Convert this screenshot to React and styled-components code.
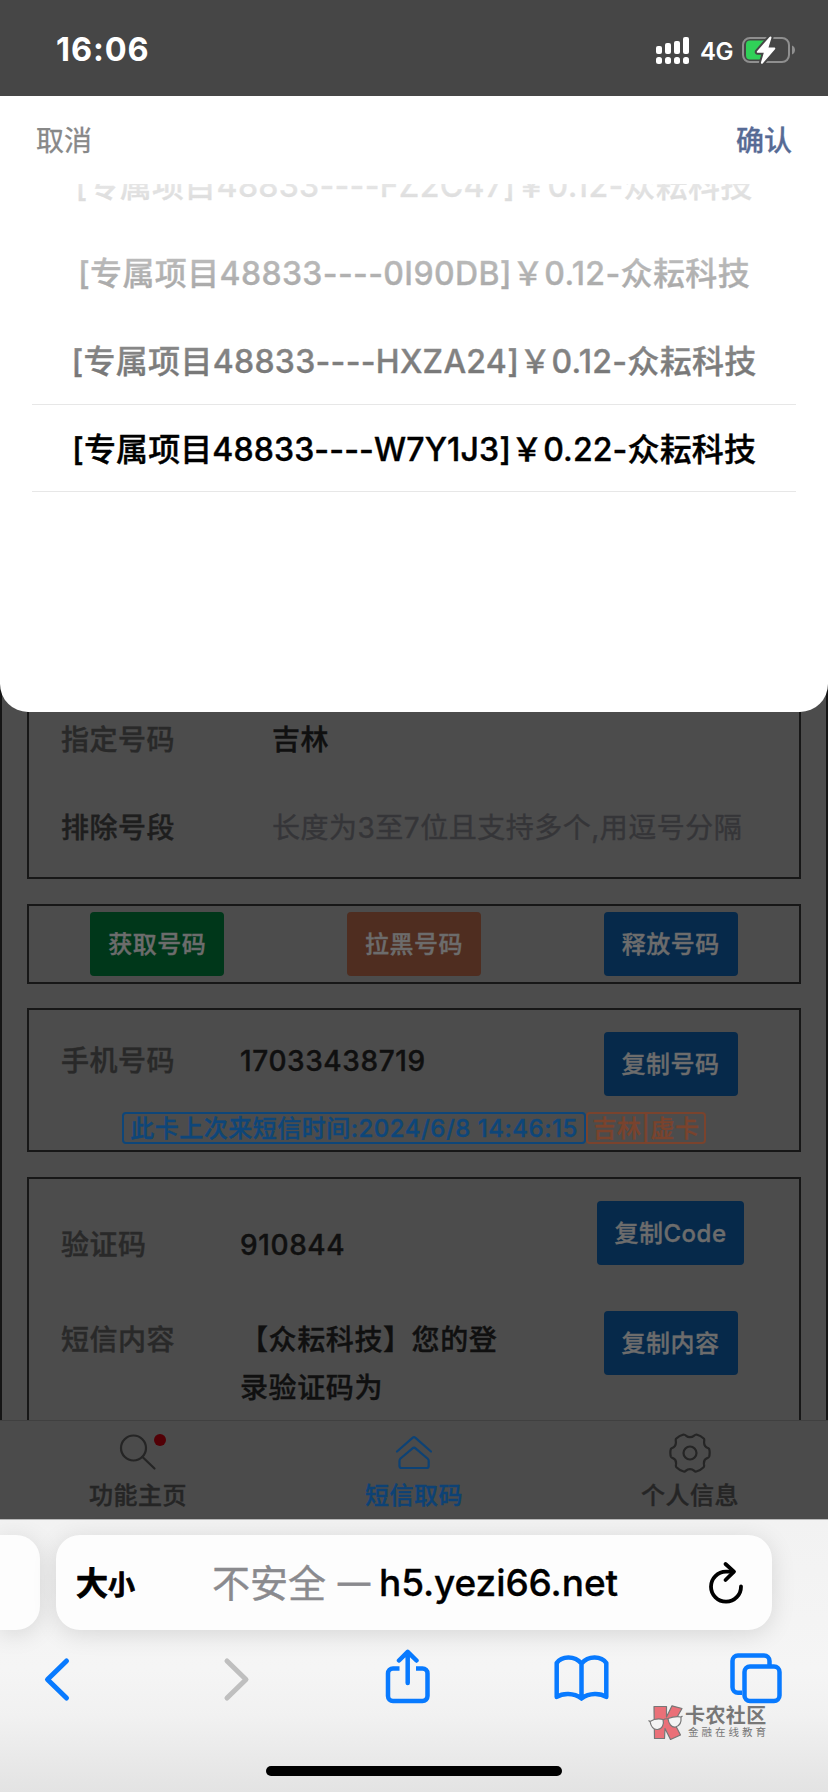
import React from "react";
import styled, { createGlobalStyle } from "styled-components";

const GlobalStyle = createGlobalStyle`
  * {
    box-sizing: border-box;
  }
  body {
    margin: 0;
    background: #4c4c4c;
    font-family: Inter, "Noto Sans CJK SC", sans-serif;
  }
`;

const options = [
  { text: "[专属项目48833----FZ2C47]￥0.12-众耘科技", spacing: 0.28 },
  { text: "[专属项目48833----0I90DB]￥0.12-众耘科技", spacing: 0.36 },
  { text: "[专属项目48833----HXZA24]￥0.12-众耘科技", spacing: 0.28 },
  { text: "[专属项目48833----W7Y1J3]￥0.22-众耘科技", spacing: 0.12, selected: true },
];

const SignalIcon = () => (
  <svg width="34" height="27" viewBox="0 0 34 27" fill="#fff">
    <rect x="0" y="9" width="6" height="8" rx="2" />
    <rect x="9" y="6" width="6" height="11" rx="2" />
    <rect x="18" y="4" width="6" height="13" rx="2" />
    <rect x="27" y="0" width="6" height="17" rx="2" />
    <rect x="0" y="20" width="6" height="7" rx="2.5" />
    <rect x="9" y="20" width="6" height="7" rx="2.5" />
    <rect x="18" y="20" width="6" height="7" rx="2.5" />
    <rect x="27" y="20" width="6" height="7" rx="2.5" />
  </svg>
);

const BatteryIcon = () => (
  <svg width="54" height="28" viewBox="0 0 54 28">
    <rect x="1" y="2" width="46" height="24" rx="7" fill="none" stroke="#8f8f8f" strokeWidth="2" />
    <path d="M50 9.5v9c4-1.6 4-7.4 0-9z" fill="#8f8f8f" />
    <path d="M8 4.5h15v19H8a4 4 0 0 1-4-4v-11a4 4 0 0 1 4-4z" fill="#30d158" />
    <path
      d="M27.5 1L15 15.2c-.6.8-.2 1.6.8 1.6h6L19 26.2c-.4 1.4 1 2 1.9 1L33 13.2c.6-.8.2-1.7-.8-1.7h-5.7L29.4 2c.4-1.500-1-2-1.900-1z"
      fill="#fff"
      stroke="#464646"
      strokeWidth="4"
      paintOrder="stroke"
    />
  </svg>
);

const SearchIcon = () => (
  <svg width="40" height="40" viewBox="0 0 40 40" fill="none" stroke="#252525" strokeWidth="2.2" strokeLinecap="round">
    <circle cx="15.500" cy="16" r="12.500" />
    <path d="M24.500 25L36.500 36.500" />
  </svg>
);

const HomeIcon = () => (
  <svg width="40" height="42" viewBox="0 -2 40 42" fill="none" stroke="#0d4275" strokeWidth="2.2" strokeLinecap="round" strokeLinejoin="round">
    <path d="M3 17.500L18.800 3.600a1.800 1.800 0 0 1 2.400 0L37 17.500" />
    <path d="M6.500 24.500L18.500 14.300a2.300 2.300 0 0 1 3 0L33.500 24.500c.8.7 1.200 1.300 1.200 2.300V32a2 2 0 0 1-2 2H7.500a2 2 0 0 1-2-2v-5.200c0-1 .3-1.700 1-2.300z" />
  </svg>
);

const GearIcon = () => (
  <svg width="42" height="42" viewBox="0 0 42 42" fill="none" stroke="#252525" strokeWidth="2.2" strokeLinejoin="round">
    <circle cx="21" cy="21" r="6.500" />
    <path d="M14.500 2.500c1 0 2 .6 2.700 1.300 2 1.700 5.600 1.700 7.600 0 .8-.7 1.700-1.300 2.700-1.300 3 .8 5.400 2.200 7.500 4.200.5 1 .2 2.200.1 3.300-.2 3 1.500 5.300 4.300 6.300.8.4 1 1.200 1.100 2 .3 2.100.2 4-.3 6.200-.3.900-1.100 1.300-1.900 1.600-2.600 1.100-3.700 3.600-3.300 6.300.2 1 .3 2-.4 2.800-2 2-4.500 3.500-7.300 4.300-.9.200-1.700-.300-2.300-.9-2.100-2-5.900-2-8 0-.6.6-1.400 1.100-2.300.9-2.800-.8-5.300-2.300-7.300-4.300-.7-.8-.6-1.800-.4-2.800.4-2.700-.7-5.200-3.300-6.300-.8-.3-1.600-.7-1.900-1.600-.5-2.200-.6-4.100-.3-6.200.1-.8.3-1.600 1.100-2 2.800-1 4.500-3.300 4.300-6.300-.1-1.100-.4-2.300.1-3.300 2.100-2 4.500-3.400 7.500-4.200z" />
  </svg>
);

const ReloadIcon = () => (
  <svg width="36" height="44" viewBox="0 0 36 44" fill="none" stroke="#000" strokeWidth="3.800" strokeLinecap="round" strokeLinejoin="round">
    <path d="M33 25.500A15 15 0 1 1 18 10.700h7" />
    <path d="M17.500 3L26 10.700 17.500 19" />
  </svg>
);

const toolIcons = [
  <svg key="back" width="54" height="60" viewBox="0 0 54 60" fill="none" stroke="#087aff" strokeWidth="5" strokeLinecap="round" strokeLinejoin="round">
    <path d="M36.500 12L17.500 30.500 36.500 49" />
  </svg>,
  <svg key="forward" width="54" height="60" viewBox="0 0 54 60" fill="none" stroke="#bfbfbf" strokeWidth="5" strokeLinecap="round" strokeLinejoin="round">
    <path d="M23 12L42 30.500 23 49" />
  </svg>,
  <svg key="share" width="54" height="60" viewBox="0 0 54 60" fill="none" stroke="#087aff" strokeWidth="4.500" strokeLinejoin="round">
    <path d="M20.500 19.500H14a5 5 0 0 0-5 5V47a5 5 0 0 0 5 5h29.500a5 5 0 0 0 5-5V24.500a5 5 0 0 0-5-5H37" />
    <path d="M28.700 34V3M20 11.500L28.700 2.800 37.500 11.500" strokeLinecap="round" />
  </svg>,
  <svg key="book" width="56" height="60" viewBox="0 0 56 60" fill="none" stroke="#087aff" strokeWidth="4.500" strokeLinejoin="round" strokeLinecap="round">
    <path d="M28.500 14.500C21.500 6 8.500 7 3.700 14v34C9.500 44 20.500 43.500 28.500 49.500V14.500C35.500 6 48.500 7 53.300 14v34C47.500 44 36.500 43.500 28.500 49.500" />
  </svg>,
  <svg key="tabs" width="54" height="60" viewBox="0 0 54 60" fill="none" stroke="#087aff" strokeWidth="4.500" strokeLinejoin="round">
    <path d="M13 43.800H9a5.500 5.500 0 0 1-5.500-5.500V12A5.500 5.500 0 0 1 9 6.500h26A5.500 5.500 0 0 1 40.500 12v5.500" />
    <rect x="15.500" y="17.500" width="35" height="34.500" rx="5.500" />
  </svg>,
];

const KanongLogo = () => (
  <svg width="36" height="36" viewBox="0 0 36 36" stroke="#777" strokeWidth="1.200" strokeLinejoin="round">
    <path d="M6 1.500h12.500v10.500L24 .8l10 2.700-8 14 6.500 12.500-10 4.500-5.500-11-.5 10H6.500z" fill="#ea7078" />
    <path d="M2 16.500c4-2.500 9-3 13-2 1.500 5-1 9.500-5.500 10-4 .3-6.500-3-7.500-8zM20 13.500c4-1.500 9-2.500 13-1.500.5 5-1.500 9-5.500 10-4 .5-7-3-7.500-8.500z" fill="#f4f4f4" />
    <path d="M15 15c1.500-1 3.500-1.500 5-1M2 16.500L.5 15.500M33 12l1.500-1" fill="none" />
  </svg>
);

export default function App() {
  return (
    <Screen>
      <GlobalStyle />
      <StatusBar>
        <Clock>16:06</Clock>
        <StatusIcons>
          <SignalIcon />
          <Network>4G</Network>
          <BatteryIcon />
        </StatusIcons>
      </StatusBar>

      <Picker>
        <PickerHeader>
          <PickerAction>取消</PickerAction>
          <PickerAction $confirm>确认</PickerAction>
        </PickerHeader>
        <Wheel>
          {options.map((item) => (
            <Option key={item.text} $selected={item.selected} $spacing={item.spacing}>
              {item.text}
            </Option>
          ))}
          <WheelMask />
        </Wheel>
      </Picker>

      <Page>
        <Section $height={207} $first>
          <FormRow>
            <Label>指定号码</Label>
            <Field>吉林</Field>
          </FormRow>
          <FormRow>
            <Label $dark>排除号段</Label>
            <Field $placeholder>长度为3至7位且支持多个,用逗号分隔</Field>
          </FormRow>
        </Section>

        <Section $height={80}>
          <ButtonRow>
            <Cell><Button $color="#00371a">获取号码</Button></Cell>
            <Cell><Button $color="#4f2d20">拉黑号码</Button></Cell>
            <Cell><Button>释放号码</Button></Cell>
          </ButtonRow>
        </Section>

        <Section $height={144}>
          <ResultRow $height={102}>
            <Label>手机号码</Label>
            <Value>17033438719</Value>
            <Cell $offset={6}><Button>复制号码</Button></Cell>
          </ResultRow>
          <Tags>
            <Tag $width={464} $color="#0e4679">此卡上次来短信时间:2024/6/8 14:46:15</Tag>
            <Tag $width={120} $color="#7a432d">吉林|虚卡</Tag>
          </Tags>
        </Section>

        <Section $height={300}>
          <ResultRow $height={132}>
            <Label>验证码</Label>
            <Value>910844</Value>
            <Cell $offset={-24}><Button $wide>复制Code</Button></Cell>
          </ResultRow>
          <ResultRow $height={132} $top>
            <Label>短信内容</Label>
            <Value>【众耘科技】您的登录验证码为</Value>
            <Cell><Button>复制内容</Button></Cell>
          </ResultRow>
        </Section>
      </Page>

      <TabBar>
        <Tab>
          <TabIcon><SearchIcon /><Dot /></TabIcon>
          功能主页
        </Tab>
        <Tab $active>
          <TabIcon><HomeIcon /></TabIcon>
          短信取码
        </Tab>
        <Tab>
          <TabIcon><GearIcon /></TabIcon>
          个人信息
        </Tab>
      </TabBar>

      <Browser>
        <AddressRow>
          <PreviousTab />
          <AddressBar>
            <TextSize>大<small>小</small></TextSize>
            <Address>
              <Insecure>不安全</Insecure>
              <Dash>—</Dash>
              <Host>h5.yezi66.net</Host>
            </Address>
            <ReloadIcon />
          </AddressBar>
        </AddressRow>
        <Toolbar>{toolIcons}</Toolbar>
        <HomeIndicator />
        <Watermark>
          <KanongLogo />
          <WatermarkText>
            <strong>卡农社区</strong>
            <span>金融在线教育</span>
          </WatermarkText>
        </Watermark>
      </Browser>
    </Screen>
  );
}

const Screen = styled.div`
  width: 828px;
  height: 1792px;
  display: flex;
  flex-direction: column;
  overflow: hidden;
  white-space: nowrap;
`;

const StatusBar = styled.header`
  height: 96px;
  flex: none;
  display: flex;
  align-items: center;
  justify-content: space-between;
  padding: 4px 32px 0 56px;
  background: #464646;
  color: #fff;
`;

const Clock = styled.span`
  padding-bottom: 2px;
  font-size: 32.500px;
  font-weight: 700;
  letter-spacing: 0.9px;
`;

const StatusIcons = styled.div`
  display: flex;
  align-items: center;
`;

const Network = styled.span`
  margin: 2px 9px 0 10px;
  font-size: 24px;
  font-weight: 600;
  letter-spacing: -0.5px;
`;

const Picker = styled.section`
  position: relative;
  z-index: 1;
  height: 616px;
  flex: none;
  border-radius: 0 0 28px 28px;
  background: #fff;
`;

const PickerHeader = styled.div`
  height: 88px;
  display: flex;
  align-items: center;
  justify-content: space-between;
  padding: 0 36px 2px;
`;

const PickerAction = styled.span`
  font-size: 28px;
  font-weight: ${(props) => (props.$confirm ? 500 : 400)};
  color: ${(props) => (props.$confirm ? "#576b95" : "#888")};
  -webkit-text-stroke: 0.3px;
`;

const Wheel = styled.div`
  position: relative;
  height: 500px;
  overflow: hidden;
  padding: 0 32px;
  &::before {
    content: "";
    display: block;
    margin-top: -44px;
  }
`;

const Option = styled.div`
  height: 88px;
  display: flex;
  align-items: center;
  justify-content: center;
  padding-bottom: 2px;
  font-size: 32px;
  font-weight: 500;
  letter-spacing: ${(props) => props.$spacing}px;
  -webkit-text-stroke: 0.4px;
  color: #000;
  border: solid #e7e7e7;
  border-width: ${(props) => (props.$selected ? "1px 0" : "0")};
`;

const WheelMask = styled.div`
  position: absolute;
  top: 0;
  left: 0;
  width: 100%;
  height: 220px;
  background: linear-gradient(rgba(255, 255, 255, 0.9), rgba(255, 255, 255, 0.4));
`;

const Page = styled.main`
  height: 748px;
  flex: none;
  margin-top: -40px;
  padding: 0 25px;
  overflow: hidden;
  background: #4c4c4c;
  border: solid #151515;
  border-width: 0 2px;
  -webkit-text-stroke: 0.4px;
`;

const Section = styled.section`
  height: ${(props) => props.$height}px;
  margin-bottom: 24.670px;
  border: 2px solid #171717;
  padding-top: ${(props) => (props.$first ? 20 : 0)}px;
`;

const FormRow = styled.div`
  height: 88px;
  display: flex;
  align-items: center;
  padding-left: 32px;
`;

const Label = styled.span`
  width: 211px;
  font-size: 28px;
  font-weight: 500;
  letter-spacing: 0.5px;
  color: ${(props) => (props.$dark ? "#1e1e1e" : "#292929")};
`;

const Field = styled.span`
  font-size: 28px;
  font-weight: ${(props) => (props.$placeholder ? 400 : 500)};
  letter-spacing: 0.5px;
  color: ${(props) => (props.$placeholder ? "#353538" : "#101010")};
`;

const ButtonRow = styled.div`
  height: 76px;
  display: grid;
  grid-template-columns: repeat(3, 1fr);
  align-items: center;
`;

const Cell = styled.div`
  display: flex;
  justify-content: center;
  padding-top: ${(props) => Math.max(props.$offset || 0, 0)}px;
  padding-bottom: ${(props) => Math.max(-props.$offset || 0, 0)}px;
`;

const Button = styled.button`
  width: ${(props) => (props.$wide ? 147 : 134)}px;
  height: 64px;
  padding: 0 0 3px;
  border: 0;
  border-radius: 4px;
  background: ${(props) => props.$color || "#06294a"};
  color: #6c6c6c;
  font: 500 24px Inter, "Noto Sans CJK SC", sans-serif;
  letter-spacing: 0.5px;
`;

const ResultRow = styled.div`
  height: ${(props) => props.$height}px;
  display: grid;
  grid-template-columns: 179px 302px 257px;
  align-items: ${(props) => (props.$top ? "start" : "center")};
  padding-left: 32px;
  ${Label} {
    width: auto;
    line-height: 58px;
  }
`;

const Value = styled.span`
  width: 260px;
  padding-top: ${(props) => (props.children.length > 12 ? 5 : 0)}px;
  font-size: 28px;
  font-weight: 500;
  line-height: 48px;
  letter-spacing: 0.6px;
  white-space: normal;
  color: #101010;
`;

const Tags = styled.div`
  display: flex;
  justify-content: center;
`;

const Tag = styled.span`
  width: ${(props) => props.$width}px;
  height: 32px;
  display: flex;
  align-items: center;
  justify-content: center;
  padding-bottom: 3px;
  border: 2px solid;
  border-radius: 4px;
  color: ${(props) => props.$color};
  font-size: 24px;
  font-weight: 500;
  letter-spacing: 0.5px;
`;

const TabBar = styled.nav`
  height: 99px;
  flex: none;
  display: grid;
  grid-template-columns: repeat(3, 1fr);
  background: #4b4b4b;
  border-top: 1px solid #404040;
  -webkit-text-stroke: 0.4px;
`;

const Tab = styled.div`
  display: flex;
  flex-direction: column;
  align-items: center;
  padding-top: 11px;
  font-size: 24px;
  font-weight: 500;
  line-height: 40px;
  letter-spacing: 0.5px;
  color: ${(props) => (props.$active ? "#0d4275" : "#252525")};
`;

const TabIcon = styled.div`
  position: relative;
  height: 44px;
`;

const Dot = styled.i`
  position: absolute;
  top: 2px;
  right: -8px;
  width: 12px;
  height: 12px;
  border-radius: 50%;
  background: #520006;
`;

const Browser = styled.footer`
  position: relative;
  flex: 1;
  display: flex;
  flex-direction: column;
  align-items: center;
  padding-top: 15px;
  border-top: 1px solid #b8b8b8;
  background: linear-gradient(#f2f2f2, #f5f5f5 55%, #f1f1f1 72%, #e3e3e3);
`;

const AddressRow = styled.div`
  width: 828px;
  height: 95px;
  display: flex;
  gap: 16px;
`;

const PreviousTab = styled.div`
  width: 40px;
  border-radius: 0 24px 24px 0;
  background: #fdfdfd;
  box-shadow: 0 4px 24px rgba(0, 0, 0, 0.12);
`;

const AddressBar = styled.div`
  width: 716px;
  display: flex;
  align-items: center;
  justify-content: space-between;
  padding: 0 28px 0 20px;
  border-radius: 24px;
  background: #fdfdfd;
  box-shadow: 0 4px 24px rgba(0, 0, 0, 0.12);
`;

const TextSize = styled.span`
  padding-bottom: 3px;
  font-size: 32px;
  font-weight: 700;
  -webkit-text-stroke: 0.8px;
  stroke-linejoin: round;
  small {
    font-size: 27px;
  }
`;

const Address = styled.div`
  display: flex;
  align-items: center;
  margin-right: 13px;
  font-size: 38px;
`;

const Insecure = styled.span`
  padding-bottom: 4px;
  color: #8a8a8e;
  -webkit-text-stroke: 0.4px;
`;

const Dash = styled.span`
  margin: 0 9px 0 12px;
  font-size: 32px;
  color: #8a8a8e;
  -webkit-text-stroke: 0.8px;
`;

const Host = styled.span`
  font-weight: 500;
  font-size: 37px;
  letter-spacing: -0.1px;
  -webkit-text-stroke: 0.3px;
`;

const Toolbar = styled.div`
  width: 828px;
  display: flex;
  justify-content: space-between;
  padding: 19px 45px 0 30px;
`;

const HomeIndicator = styled.div`
  width: 296px;
  height: 10px;
  margin-top: 57px;
  border-radius: 5px;
  background: #000;
`;

const Watermark = styled.div`
  position: absolute;
  top: 185px;
  left: 648px;
  display: flex;
  gap: 1px;
  color: #777;
`;

const WatermarkText = styled.div`
  display: flex;
  flex-direction: column;
  strong {
    font-size: 20px;
    line-height: 22px;
    font-weight: 700;
    letter-spacing: 0.4px;
  }
  span {
    padding-left: 3px;
    font-size: 10.500px;
    line-height: 12px;
    letter-spacing: 3px;
  }
`;
